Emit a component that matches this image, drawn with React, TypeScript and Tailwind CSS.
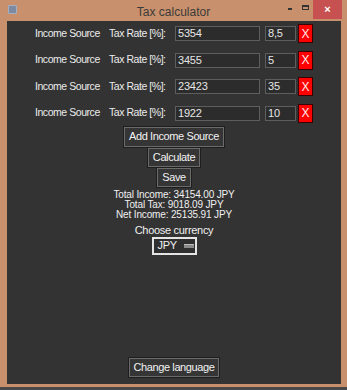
import React from "react";

type Row = { amount: string; rate: string };

const ROWS: Row[] = [
  { amount: "5354", rate: "8,5" },
  { amount: "3455", rate: "5" },
  { amount: "23423", rate: "35" },
  { amount: "1922", rate: "10" },
];

const FONT = { fontFamily: '"Liberation Sans", Arial, sans-serif' };

function Btn({ children, className = "" }: { children: React.ReactNode; className?: string }) {
  return (
    <button
      className={`h-[19px] px-[4px] whitespace-nowrap bg-[#353535] border border-[#6b6b6b] shadow-[0_0_0_1px_#1e1e1e] text-[#f2f2f2] text-[11px] tracking-[-0.4px] leading-none ${className}`}
    >
      {children}
    </button>
  );
}

export default function App() {
  return (
    <div className="w-[347px] h-[390px] flex flex-col bg-[#c8906c] overflow-hidden" style={FONT}>
      {/* Title bar */}
      <div className="relative h-[21px] flex items-start shrink-0">
        <div className="ml-[8px] mt-[5px] w-[9px] h-[9px] bg-[#7d8aa0] rounded-[1px] border border-[#a6b0c0]" />
        <span className="absolute inset-x-0 top-[3px] text-center text-[12px] text-[#3b3b3b]">Tax calculator</span>
        <div className="ml-auto flex items-start">
          <div className="mt-[8px] w-[4px] h-[2px] bg-[#333]" />
          <div className="ml-[10px] mt-[5px] w-[7px] h-[5px] border border-[#333] border-t-2" />
          <div className="ml-[4px] w-[29px] h-[19px] bg-[#c75050] flex items-center justify-center text-white text-[11px] font-bold leading-none">
            ×
          </div>
          <div className="w-[5px]" />
        </div>
      </div>

      <div className="flex-1 flex">
        <div className="w-[7px]" />
        <div className="flex-1 bg-[#333333] flex flex-col items-center pt-[3px] pb-[7px]">
          {/* Income rows */}
          <div className="flex flex-col gap-[7.5px]">
            {ROWS.map((r, i) => (
              <div key={i} className="flex items-center h-[19px] text-[10.5px] tracking-[-0.45px] text-[#ececec]">
                <span className="w-[74px]">Income Source</span>
                <span className="w-[66px]">Tax Rate [%]:</span>
                <div className="w-[85px] h-[15px] bg-[#2c2c2c] border border-[#5e5e5e] flex items-center px-[2px] text-[11px] tracking-[-0.2px] text-[#e6e6e6]">
                  {r.amount}
                </div>
                <div className="ml-[5px] w-[31px] h-[15px] bg-[#2c2c2c] border border-[#5e5e5e] flex items-center px-[2px] text-[11px] tracking-[-0.2px] text-[#e6e6e6]">
                  {r.rate}
                </div>
                <div className="ml-[2px] w-[15px] h-[19px] bg-[#ff0000] border border-[#3a0000] flex items-center justify-center text-[12px] text-[#ffe8e8] tracking-normal">
                  X
                </div>
              </div>
            ))}
          </div>

          {/* Actions */}
          <div className="mt-[4px] flex flex-col items-center gap-[1px]">
            <Btn className="h-[20px]">Add Income Source</Btn>
            <Btn>Calculate</Btn>
            <Btn className="h-[18px]">Save</Btn>
          </div>

          {/* Results */}
          <div className="mt-[3px] flex flex-col items-center text-[10px] leading-[10px] tracking-[-0.15px] text-[#f0f0f0]">
            <span className="block h-[10px] leading-[10px]">Total Income: 34154.00 JPY</span>
            <span className="block h-[10px] leading-[10px]">Total Tax: 9018.09 JPY</span>
            <span className="block h-[10px] leading-[10px]">Net Income: 25135.91 JPY</span>
          </div>

          <span className="mt-[4px] text-[11px] leading-[12px] tracking-[-0.3px] text-[#f0f0f0]">Choose currency</span>

          <div className="mt-[1px] w-[45px] h-[18px] border-2 border-[#e4e4e4] bg-[#2f2f2f] flex items-center pl-[4px] text-[11px] tracking-[-0.3px] text-[#f0f0f0]">
            <span>JPY</span>
            <div className="ml-[7px] w-[10px] h-[4px] bg-[#8a8a8a] border-t border-[#bdbdbd]" />
          </div>

          <div className="flex-1" />

          <Btn>Change language</Btn>
        </div>
        <div className="w-[6px]" />
      </div>

      <div className="h-[3px] shrink-0" />
      <div className="h-[3px] bg-[#4a4746] shrink-0" />
    </div>
  );
}
